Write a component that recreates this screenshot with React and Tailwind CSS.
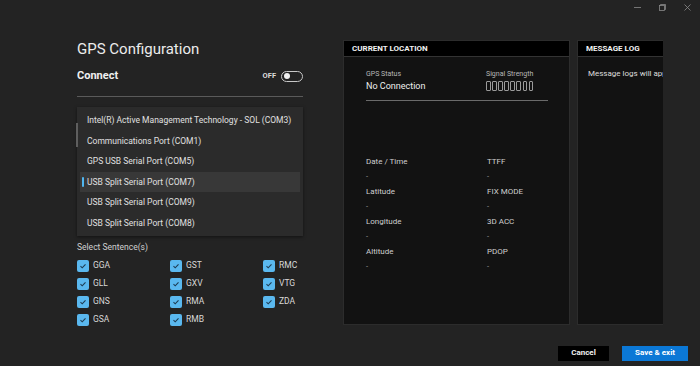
import React, { useState } from 'react';

const ports = [
  'Intel(R) Active Management Technology - SOL (COM3)',
  'Communications Port (COM1)',
  'GPS USB Serial Port (COM5)',
  'USB Split Serial Port (COM7)',
  'USB Split Serial Port (COM9)',
  'USB Split Serial Port (COM8)',
];

const sentences = ['GGA', 'GST', 'RMC', 'GLL', 'GXV', 'VTG', 'GNS', 'RMA', 'ZDA', 'GSA', 'RMB'];

const fields = [
  ['Date / Time', 'TTFF'],
  ['Latitude', 'FIX MODE'],
  ['Longitude', '3D ACC'],
  ['Altitude', 'PDOP'],
];

function Check({ label }) {
  return (
    <div className="flex items-center gap-[4px] h-[18px]">
      <span className="w-[12px] h-[12px] rounded-[2px] bg-[#5ab8ef] flex items-center justify-center">
        <svg width="8" height="8" viewBox="0 0 8 8">
          <path d="M1.5 4.2 L3.2 5.8 L6.5 2.3" fill="none" stroke="#1d3b52" strokeWidth="1.1" />
        </svg>
      </span>
      <span className="text-[8.5px] text-[#d8d8d8]">{label}</span>
    </div>
  );
}

export default function App() {
  const [selected] = useState(3);

  return (
    <div className="w-[700px] h-[366px] bg-[#232323] overflow-hidden flex flex-col text-white" style={{ fontFamily: 'Roboto, "Liberation Sans", sans-serif' }}>
      <div className="h-[14px] flex justify-end items-center gap-[18px] pr-[9px] text-[#8a8a8a]">
        <svg width="7" height="7" viewBox="0 0 7 7"><path d="M0 3.5 H7" stroke="#8a8a8a" strokeWidth="0.8" /></svg>
        <svg width="7" height="7" viewBox="0 0 7 7"><rect x="0.5" y="1.5" width="5" height="5" fill="none" stroke="#8a8a8a" strokeWidth="0.8" /><path d="M1.5 1.5 V0.5 H6.5 V5.5 H5.5" fill="none" stroke="#8a8a8a" strokeWidth="0.8" /></svg>
        <svg width="7" height="7" viewBox="0 0 7 7"><path d="M0.5 0.5 L6.5 6.5 M6.5 0.5 L0.5 6.5" stroke="#8a8a8a" strokeWidth="0.8" /></svg>
      </div>

      <div className="flex pl-[77px] pt-[24px]">
        {/* left column */}
        <div className="w-[226px] flex flex-col">
          <h1 className="mt-[1px] text-[15px] leading-[20px] text-[#ececec]">GPS Configuration</h1>
          <div className="mt-[10px] h-[14px] flex items-center justify-between">
            <span className="text-[11px] font-bold text-[#f0f0f0]">Connect</span>
            <div className="flex items-center gap-[5px]">
              <span className="text-[7.5px] font-bold text-[#dcdcdc]">OFF</span>
              <span className="w-[22px] h-[11px] rounded-full border border-[#c8c8c8] flex items-center pl-[2px]">
                <span className="w-[6px] h-[6px] rounded-full bg-[#f0f0f0]" />
              </span>
            </div>
          </div>
          <div className="mt-[13px] h-px bg-[#5a5a5a]" />

          <div className="mt-[10px] relative bg-[#2b2b2b] pt-[3px] pb-[2px] px-[3px] shadow-[0_1px_3px_rgba(0,0,0,0.5)]">
            <span className="absolute left-[-1px] top-[16px] w-[2px] h-[24px] bg-[#5e5e5e]" />
            {ports.map((p, i) => (
              <div key={p} className={`h-[20.6px] flex items-center pl-[7px] text-[8.5px] text-[#e0e0e0] relative ${i === selected ? 'bg-[#383838]' : ''}`}>
                {i === selected && <span className="absolute left-[2px] top-[5px] w-[2px] h-[10px] rounded bg-[#4fb6f0]" />}
                {p}
              </div>
            ))}
          </div>

          <div className="mt-[5px] text-[8.5px] leading-[12px] text-[#d0d0d0]">Select Sentence(s)</div>
          <div className="mt-[4px] grid grid-cols-[93px_93px_40px]">
            {sentences.map((s) => <Check key={s} label={s} />)}
          </div>
        </div>

        {/* panels */}
        <div className="ml-[40px] mt-[2px] w-[320px] flex gap-[7px] overflow-hidden">
          <div className="w-[227px] shrink-0 h-[285px] flex flex-col border border-[#2c2c2c]">
            <div className="h-[16px] bg-black flex items-center pl-[8px] text-[8px] font-bold text-[#f2f2f2] border-b border-[#333]">CURRENT LOCATION</div>
            <div className="flex-1 bg-[#121212] pl-[22px] pt-[12px]">
              <div className="flex w-[182px]">
                <div className="w-[120px]">
                  <div className="text-[7px] text-[#b8b8b8]">GPS Status</div>
                  <div className="mt-[0px] text-[9px] text-[#eeeeee]">No Connection</div>
                </div>
                <div>
                  <div className="text-[7px] text-[#b8b8b8]">Signal Strength</div>
                  <div className="mt-[1px] flex gap-[1.5px]">
                    {[0, 1, 2, 3, 4, 5, 6, 7].map((k) => (
                      <span key={k} className="w-[4.6px] h-[10px] border border-[#9a9a9a] rounded-[1px]" />
                    ))}
                  </div>
                </div>
              </div>
              <div className="mt-[7px] w-[182px] h-px bg-[#6a6a6a]" />
              <div className="mt-[53px] flex flex-col">
                {fields.map(([a, b]) => (
                  <div key={a} className="flex flex-col">
                    <div className="flex h-[15px] items-center text-[8px] text-[#cfcfcf]">
                      <span className="w-[121px]">{a}</span>
                      <span>{b}</span>
                    </div>
                    <div className="flex h-[15px] items-center text-[7.5px] text-[#9a9a9a]">
                      <span className="w-[121px]">-</span>
                      <span>-</span>
                    </div>
                  </div>
                ))}
              </div>
            </div>
          </div>

          <div className="w-[100px] shrink-0 h-[285px] flex flex-col border border-[#2c2c2c]">
            <div className="h-[16px] bg-black flex items-center pl-[8px] text-[8px] font-bold text-[#f2f2f2] border-b border-[#333] whitespace-nowrap">MESSAGE LOG</div>
            <div className="flex-1 bg-[#121212] pl-[10px] pt-[11px]">
              <div className="text-[8px] text-[#dddddd] whitespace-nowrap">Message logs will appear here</div>
            </div>
          </div>
        </div>
      </div>

      <div className="mt-[17px] flex justify-end gap-[13px] pr-[12px]">
        <button className="w-[51px] h-[15px] bg-black text-[8px] font-bold text-[#f0f0f0]">Cancel</button>
        <button className="w-[66px] h-[15px] bg-[#0b78d6] text-[8px] font-bold text-white">Save &amp; exit</button>
      </div>
    </div>
  );
}
